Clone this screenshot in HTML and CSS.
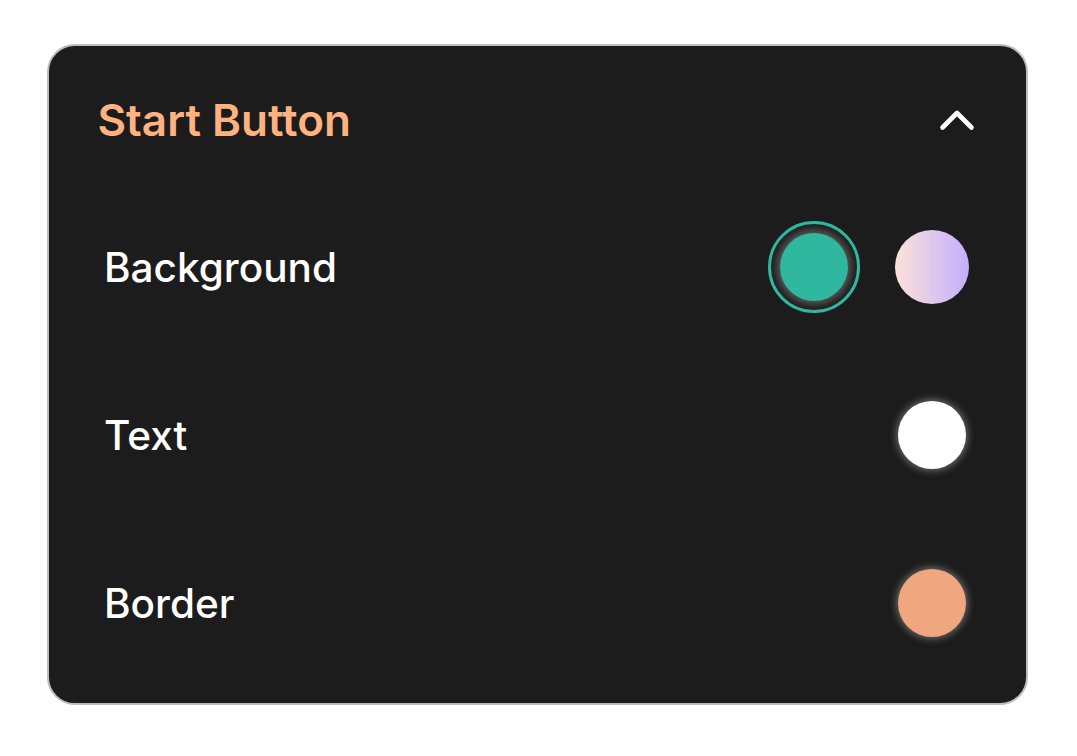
FILE: index.html
```html
<!DOCTYPE html>
<html>
<head>
<meta charset="utf-8">
<link rel="stylesheet" href="styles.css">
</head>
<body>
<div class="card">
  <div class="header">
    <div class="title">Start Button</div>
    <svg class="chev" width="36" height="22" viewBox="0 0 36 22"><path d="M3.5 18.5 L18 4 L32.5 18.5" fill="none" stroke="#fff" stroke-width="4.6" stroke-linecap="round" stroke-linejoin="round"/></svg>
  </div>
  <div class="rows">
    <div class="row">
      <div class="label">Background</div>
      <div class="swatches">
        <div class="cell"><div class="sw teal selected"></div></div>
        <div class="cell"><div class="sw grad"></div></div>
      </div>
    </div>
    <div class="row">
      <div class="label">Text</div>
      <div class="swatches">
        <div class="cell"><div class="sw white"></div></div>
      </div>
    </div>
    <div class="row">
      <div class="label">Border</div>
      <div class="swatches">
        <div class="cell"><div class="sw peach"></div></div>
      </div>
    </div>
  </div>
</div>
</body>
</html>
```
FILE: styles.css
```css
html, body { margin: 0; padding: 0; background: #fff; }
body { padding: 44px 49px 0 47px; font-family: Inter, "Noto Sans", sans-serif; }
.card {
  box-sizing: border-box;
  width: 981px;
  height: 661px;
  border: 2.5px solid #bdbdbd;
  border-radius: 28px;
  background: #1c1c1c;
  padding: 52px 48px 0 48.5px;
}
.header { display: flex; align-items: center; justify-content: space-between; height: 44px; padding-right: 3px; }
.title { color: #ffb27f; font-size: 44px; font-weight: 600; line-height: 44px; }
.chev { display: block; }
.rows { display: flex; flex-direction: column; gap: 76px; margin-top: 79px; padding-left: 6.5px; }
.row { display: flex; align-items: center; justify-content: space-between; height: 92px; }
.label { color: #fff; font-size: 40.5px; font-weight: 500; }
.swatches { display: flex; gap: 26px; }
.cell { width: 92px; height: 92px; display: flex; align-items: center; justify-content: center; }
.sw { width: 68px; height: 68px; border-radius: 50%; box-shadow: 0 0 7px 2px rgba(255,255,255,0.33); }
.teal { background: #2fb89f; box-shadow: 0 0 8px 3px rgba(255,255,255,0.3); }
.grad { width: 74px; height: 74px; box-shadow: none; background: linear-gradient(90deg, #fde2d8, #c3aefe); }
.white { background: #ffffff; }
.peach { background: #f0a77f; }
.selected { outline: 3px solid #2fb89f; outline-offset: 9px; }
```
